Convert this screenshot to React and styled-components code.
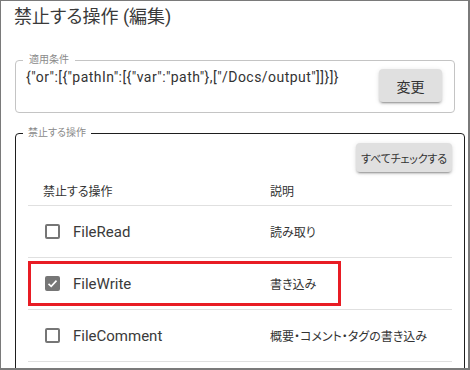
import React from "react";
import styled, { createGlobalStyle } from "styled-components";

const Global = createGlobalStyle`
  html, body { margin: 0; padding: 0; background: #fff; }
  body {
    font-family: Roboto, "Noto Sans CJK JP", sans-serif;
    font-feature-settings: "palt";
    color: #333;
  }
  * { box-sizing: border-box; }
`;

const Frame = styled.div`
  width: 470px;
  height: 370px;
  overflow: hidden;
  border-style: solid;
  border-color: #7a7a7a;
  border-width: 1px 2px 2px 1px;
  padding: 2px 0 0 14px;
  background: #fff;
`;

const Title = styled.h1`
  margin: 0 0 0 -1px;
  font-size: 18px;
  line-height: 28px;
  font-weight: 400;
  color: #3a3a3a;
`;

const Group = styled.section`
  position: relative;
  width: ${(p) => p.$w}px;
  margin-top: ${(p) => p.$mt}px;
  border: 1px solid ${(p) => (p.$dark ? "#1e1e1e" : "#c4c4c4")};
  border-radius: 4px;
  padding: ${(p) => p.$pad};
`;

const Legend = styled.span`
  position: absolute;
  top: -8px;
  left: 7px;
  padding: 0 ${(p) => p.$px}px;
  background: #fff;
  font-size: 10px;
  line-height: 14px;
  color: #8a8a8a;
`;

const ConditionRow = styled.div`
  display: flex;
  justify-content: space-between;
  align-items: flex-start;
`;

const Code = styled.div`
  margin-top: -2px;
  font-size: 14px;
  line-height: 20px;
  letter-spacing: 0.45px;
  color: #333;
  white-space: nowrap;
`;

const Button = styled.button`
  flex: none;
  width: ${(p) => p.$w}px;
  height: ${(p) => p.$h}px;
  padding: 0;
  border: none;
  border-radius: 4px;
  background: #e0e0e0;
  color: #333;
  font-family: inherit;
  font-feature-settings: "palt";
  font-size: ${(p) => p.$fs}px;
  letter-spacing: ${(p) => p.$ls || 0}px;
  box-shadow: 0 3px 1px -2px rgba(0, 0, 0, 0.2), 0 2px 2px 0 rgba(0, 0, 0, 0.14),
    0 1px 5px 0 rgba(0, 0, 0, 0.12);
  cursor: pointer;
`;

const Toolbar = styled.div`
  display: flex;
  justify-content: flex-end;
  margin-bottom: 4px;
`;

const Row = styled.div`
  position: relative;
  display: grid;
  grid-template-columns: 242px 1fr;
  align-items: center;
  height: ${(p) => (p.$head ? 30 : 52)}px;
  border-bottom: 1px solid #e0e0e0;
`;

const HeadCell = styled.div`
  padding-left: ${(p) => p.$pl || 0}px;
  font-size: 12px;
  color: #333;
`;

const OpCell = styled.div`
  display: flex;
  align-items: center;
  gap: 13px;
  padding-left: 17px;
`;

const Box = styled.span`
  width: 15px;
  height: 15px;
  border-radius: 2px;
  border: 2px solid #767676;
  background: ${(p) => (p.$checked ? "#767676" : "#fff")};
  display: flex;
  align-items: center;
  justify-content: center;
`;

const OpName = styled.span`
  font-size: 15px;
  color: #3a3a3a;
`;

const Desc = styled.div`
  font-size: 12px;
  color: #333;
`;

const Highlight = styled.div`
  position: absolute;
  left: 0;
  top: 3px;
  width: 313px;
  height: 45px;
  border: 3px solid #e81c24;
  pointer-events: none;
`;

const rows = [
  { name: "FileRead", desc: "読み取り", checked: false },
  { name: "FileWrite", desc: "書き込み", checked: true, mark: true },
  { name: "FileComment", desc: "概要・コメント・タグの書き込み", checked: false },
];

function Check({ checked }) {
  return (
    <Box $checked={checked}>
      {checked && (
        <svg width="11" height="11" viewBox="0 0 11 11">
          <path d="M1.5 5.8 L4.2 8.3 L9.5 2.6" fill="none" stroke="#fff" strokeWidth="1.6" />
        </svg>
      )}
    </Box>
  );
}

export default function App() {
  return (
    <Frame>
      <Global />
      <Title>禁止する操作 (編集)</Title>
      <Group $w={440} $mt={29} $pad="8px 12px 10px 10px">
        <Legend $px={6}>適用条件</Legend>
        <ConditionRow>
          <Code>{'{"or":[{"pathIn":[{"var":"path"},["/Docs/output"]]}]}'}</Code>
          <Button $w={63} $h={33} $fs={14}>変更</Button>
        </ConditionRow>
      </Group>
      <Group $w={450} $mt={20} $dark $pad="9px 12px 40px 12px">
        <Legend $px={5}>禁止する操作</Legend>
        <Toolbar>
          <Button $w={96} $h={29} $fs={11} $ls={-0.2}>すべてチェックする</Button>
        </Toolbar>
        <Row $head>
          <HeadCell $pl={15}>禁止する操作</HeadCell>
          <HeadCell>説明</HeadCell>
        </Row>
        {rows.map((r) => (
          <Row key={r.name}>
            <OpCell>
              <Check checked={r.checked} />
              <OpName>{r.name}</OpName>
            </OpCell>
            <Desc>{r.desc}</Desc>
            {r.mark && <Highlight />}
          </Row>
        ))}
      </Group>
    </Frame>
  );
}
